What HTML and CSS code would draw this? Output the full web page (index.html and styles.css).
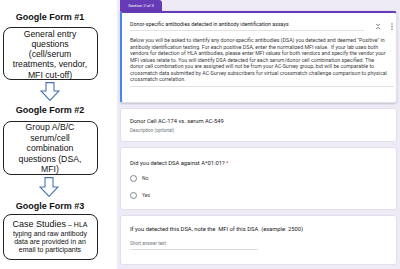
FILE: index.html
```html
<!DOCTYPE html>
<html lang="en">
<head>
    <meta charset="UTF-8">
    <title>AC-Survey Google Forms</title>
    <link rel="stylesheet" href="styles.css">
</head>
<body>

<div class="figure">

    <!-- Flow of the three forms -->
    <div class="flow">
        <div class="step-title first">Google Form #1</div>
        <div class="step-box box-one">General entry<br>questions<br>(cell/serum<br>treatments, vendor,<br>MFI cut-off)</div>
        <svg class="arrow arrow-one" width="20" height="19" viewBox="0 0 20 19">
            <polygon points="6,0.6 14,0.6 14,9 19,9 10,18.4 1,9 6,9" />
        </svg>

        <div class="step-title">Google Form #2</div>
        <div class="step-box box-two">Group A/B/C<br>serum/cell<br>combination<br>questions (DSA,<br>MFI)</div>
        <svg class="arrow arrow-two" width="20" height="20" viewBox="0 0 20 20">
            <polygon points="6,0.6 14,0.6 14,10 19,10 10,19.4 1,10 6,10" />
        </svg>

        <div class="step-title">Google Form #3</div>
        <div class="step-box box-three">
            <div><span class="big">Case Studies</span> – HLA</div>
            <div>typing and raw antibody</div>
            <div>data are provided in an</div>
            <div>email to participants</div>
        </div>
    </div>

    <!-- Google Form screenshot -->
    <div class="form">
        <div class="tab">Section 2 of 3</div>

        <div class="card section-card">
            <div class="title-row">
                <div class="section-title">Donor-specific antibodies detected in antibody identification assays</div>
                <svg class="icon" width="6" height="7" viewBox="0 0 6 7">
                    <path d="M1 1 L3 2.6 L5 1 M1 6 L3 4.4 L5 6" fill="none" stroke="#5f6368" stroke-width="0.8" />
                </svg>
                <svg class="icon" width="4" height="7" viewBox="0 0 4 7">
                    <circle cx="2" cy="1" r="0.7" fill="#5f6368" />
                    <circle cx="2" cy="3.5" r="0.7" fill="#5f6368" />
                    <circle cx="2" cy="6" r="0.7" fill="#5f6368" />
                </svg>
            </div>
            <div class="section-desc">Below you will be asked to identify any donor-specific antibodies (DSA) you detected and deemed "Positive" in<br>antibody identification testing. For each positive DSA, enter the normalized MFI value.&nbsp; If your lab uses both<br>vendors for detection of HLA antibodies, please enter MFI values for both vendors and specify the vendor your<br>MFI values relate to. You will identify DSA detected for each serum/donor cell combination specified. The<br>donor cell combination you are assigned will not be from your AC-Survey group, but will be comparable to<br>crossmatch data submitted by AC-Survey subscribers for virtual crossmatch challenge comparison to physical<br>crossmatch correlation.</div>
        </div>

        <div class="card info-card">
            <div class="card-title">Donor Cell AC-174 vs. serum AC-549</div>
            <div class="card-hint">Description (optional)</div>
        </div>

        <div class="card question-card">
            <div class="card-title">Did you detect DSA against A*01:01? <span class="req">*</span></div>
            <div class="option"><span class="radio"></span>No</div>
            <div class="option"><span class="radio"></span>Yes</div>
        </div>

        <div class="card answer-card">
            <div class="card-title">If you detected this DSA, note the&nbsp; MFI of this DSA. (example: 2500)</div>
            <div class="short-answer">Short answer text</div>
        </div>
    </div>

</div>

</body>
</html>
```

FILE: styles.css
```css
/* General */
body {
    margin: 0;
    background-color: #ffffff;
    font-family: 'Liberation Sans', Arial, sans-serif;
}

.figure {
    display: flex;
    width: 400px;
    height: 269px;
    overflow: hidden;
}

/* Left flow column */
.flow {
    width: 100px;
    display: flex;
    flex-direction: column;
    align-items: center;
    padding-top: 11px;
    flex-shrink: 0;
}

.step-title {
    height: 12px;
    line-height: 12px;
    font-size: 9px;
    font-weight: bold;
    color: #111;
    margin-top: 3px;
}

.step-title.first {
    margin-top: 0;
}

.step-box {
    box-sizing: border-box;
    width: 95px;
    border: 1.2px solid #222;
    border-radius: 8px;
    text-align: center;
    color: #111;
    font-size: 8.7px;
}

.box-one {
    margin-top: 4px;
    height: 53px;
    line-height: 10.25px;
    padding-top: 0.5px;
}

.box-two {
    margin-top: 5px;
    height: 54px;
    line-height: 10.5px;
}

.box-three {
    margin-top: 2px;
    height: 46px;
    display: flex;
    flex-direction: column;
    justify-content: center;
    font-size: 7px;
    line-height: 7.7px;
    padding-bottom: 1px;
}

.box-three .big {
    font-size: 9px;
}

.box-three div:first-child {
    line-height: 10px;
}

.arrow {
    display: block;
    margin-top: 2px;
}

.arrow polygon {
    fill: #ffffff;
    stroke: #4a72b0;
    stroke-width: 1.1;
}

.arrow-two {
    margin-left: -3px;
}

/* Google Form panel */
.form {
    flex: 1;
    margin-left: 17px;
    background-color: #efebf6;
    padding: 0 3px;
    display: flex;
    flex-direction: column;
    font-family: Roboto, 'Liberation Sans', sans-serif;
    color: #202124;
}

.tab {
    width: 42px;
    height: 11px;
    background-color: #673ab7;
    color: #ffffff;
    font-size: 4.2px;
    line-height: 11px;
    text-align: center;
    border-radius: 0 3px 0 0;
}

.card {
    box-sizing: border-box;
    background-color: #ffffff;
    border: 0.6px solid #e3deec;
    border-radius: 3px;
    padding-left: 9px;
    margin-top: 5px;
}

.section-card {
    margin-top: 0;
    height: 92px;
    border-top: 2px solid #673ab7;
    border-left: 2px solid #4285f4;
    border-radius: 0 3px 3px 3px;
    padding: 9px 2px 0 8px;
    box-shadow: 0 0.5px 2px rgba(0, 0, 0, 0.18);
}

.title-row {
    display: flex;
    align-items: center;
    gap: 9px;
    height: 8px;
}

.section-title {
    flex: 1;
    font-size: 5.3px;
    padding-bottom: 3px;
    border-bottom: 0.5px solid #e2e2e2;
    margin-right: 2px;
}

.title-row .icon {
    flex-shrink: 0;
}

.section-desc {
    margin-top: 7px;
    font-size: 5.25px;
    line-height: 6.55px;
    color: #3c4043;
    white-space: nowrap;
    padding-bottom: 3px;
    border-bottom: 0.5px solid #e2e2e2;
}

.card-title {
    font-size: 5.8px;
}

.req {
    color: #d93025;
}

.info-card {
    height: 34px;
    padding-top: 9px;
}

.card-hint {
    margin-top: 4px;
    font-size: 4.6px;
    color: #70757a;
}

.question-card {
    height: 63px;
    padding-top: 12px;
}

.option {
    display: flex;
    align-items: center;
    gap: 5px;
    font-size: 5px;
    color: #3c4043;
    margin-top: 7px;
    height: 10px;
}

.radio {
    box-sizing: border-box;
    width: 7px;
    height: 7px;
    border: 0.8px solid #80868b;
    border-radius: 50%;
}

.answer-card {
    height: 50px;
    padding-top: 10px;
}

.short-answer {
    width: 128px;
    margin-top: 9px;
    font-size: 4.6px;
    color: #70757a;
    padding-bottom: 3px;
    border-bottom: 0.6px solid #dadce0;
}
```
